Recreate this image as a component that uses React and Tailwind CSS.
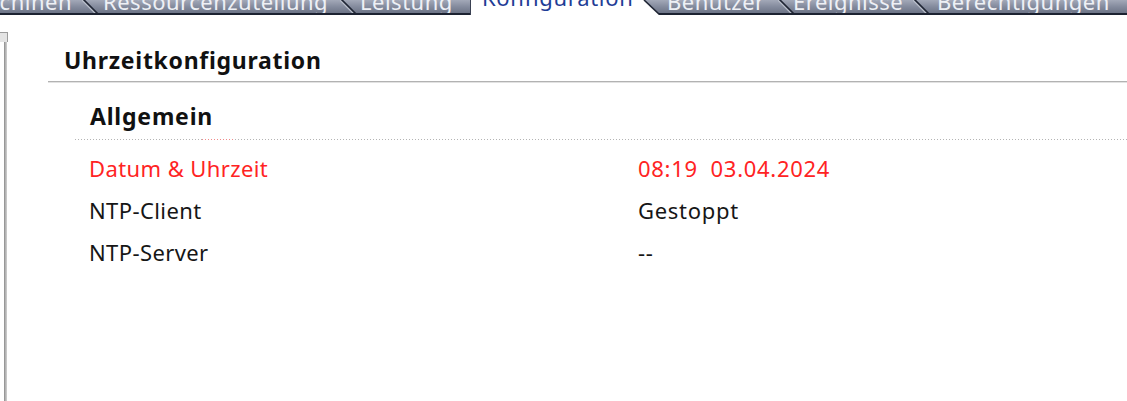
import React from "react";

function Sep() {
  return (
    <svg className="absolute left-0 top-0" width="18" height="15" viewBox="0 0 18 15">
      <line x1="-1" y1="-1" x2="15" y2="15" stroke="#b8bdc9" strokeWidth="1.5" />
      <line x1="1" y1="-1" x2="17" y2="15" stroke="#1f2534" strokeWidth="1.6" />
    </svg>
  );
}

function Tab({ w, pl, children, sep = true, grow = false }) {
  return (
    <div
      className={`relative h-[15px] shrink-0 overflow-hidden border-b-2 border-[#1c2231] bg-gradient-to-b from-[#a3a9b8] via-[#858c9e] to-[#6d7487] ${grow ? "flex-1" : ""}`}
      style={grow ? undefined : { width: w }}
    >
      {sep && <Sep />}
      <div
        className="mt-[-14.5px] whitespace-nowrap text-[22px] leading-[30px] tracking-[0.5px] text-[#eef0f5]"
        style={{ paddingLeft: pl }}
      >
        {children}
      </div>
    </div>
  );
}

export default function App() {
  const rows = [
    { k: "Datum & Uhrzeit", v: "08:19\u00a0\u00a003.04.2024", red: true },
    { k: "NTP-Client", v: "Gestoppt" },
    { k: "NTP-Server", v: "--" },
  ];
  return (
    <div className="flex h-[401px] w-[1127px] flex-col overflow-hidden bg-white font-['Noto_Sans','DejaVu_Sans',sans-serif] text-[#141414]">
      {/* tab bar */}
      <div className="flex h-[15px] shrink-0">
        <div className="relative flex h-[15px] w-[82px] shrink-0 justify-end overflow-hidden border-b-2 border-[#1c2231] bg-gradient-to-b from-[#a3a9b8] via-[#858c9e] to-[#6d7487]">
          <div className="mt-[-14.5px] whitespace-nowrap pr-[10px] text-[22px] leading-[30px] tracking-[0.5px] text-[#eef0f5]">
            Virtuelle Maschinen
          </div>
        </div>
        <Tab w={258} pl={21}>Ressourcenzuteilung</Tab>
        <Tab w={130} pl={20}>Leistung</Tab>
        <div className="relative h-[15px] w-[173px] shrink-0 border-l border-[#3a4152] bg-white">
          <div className="mt-[-18px] whitespace-nowrap pl-[11px] text-[22px] leading-[30px] tracking-[0.7px] text-[#1f3d96]">
            Konfiguration
          </div>
          <svg className="absolute left-[172px] top-0 z-10" width="20" height="15" viewBox="0 0 20 15">
            <polygon points="0,0 1,0 17,15 0,15" fill="#ffffff" />
            <line x1="1" y1="0" x2="17" y2="15" stroke="#1f2534" strokeWidth="1.6" />
          </svg>
        </div>
        <Tab w={135} pl={24} sep={false}>Benutzer</Tab>
        <Tab w={135} pl={15}>Ereignisse</Tab>
        <Tab grow pl={24}>Berechtigungen</Tab>
      </div>

      {/* body */}
      <div className="flex flex-1">
        <div className="flex w-[8px] shrink-0 flex-col pt-[17px]">
          <div className="h-[10px] w-[8px] border-r border-t border-[#9c9c9c] bg-[#e4e4e4]" />
          <div className="ml-[4px] w-[3px] flex-1 bg-gradient-to-r from-[#8a8a8a] via-[#b4b4b4] to-[#d0d0d0]" />
        </div>

        <div className="flex flex-1 flex-col pl-[40px] pt-[30px]">
          <div className="border-b border-[#b2b2b2] pb-[6px] pl-[16px] text-[23px] font-bold leading-[30px] tracking-[0.72px] text-[#111]">
            Uhrzeitkonfiguration
          </div>
          <div className="h-[1px] bg-[#e2e2e2]" />

          <div className="pl-[42px] pt-[18px] text-[23px] font-bold leading-[30px] tracking-[0.8px] text-[#111]">
            Allgemein
          </div>

          <div className="ml-[27px] mt-[8px] flex h-[1px]">
            <div className="w-[127px] bg-[repeating-linear-gradient(to_right,#b4b4b4_0_1px,transparent_1px_3px)]" />
            <div className="w-[33px] bg-[repeating-linear-gradient(to_right,#f08a8a_0_1px,transparent_1px_3px)]" />
            <div className="flex-1 bg-[repeating-linear-gradient(to_right,#b4b4b4_0_1px,transparent_1px_3px)]" />
          </div>

          <div className="flex flex-col pl-[41px] pt-[12.5px]">
            {rows.map((r) => (
              <div
                key={r.k}
                className={`grid h-[42px] grid-cols-[549px_1fr] text-[22px] leading-[30px] ${r.red ? "text-[#ff2323]" : "text-[#161616]"}`}
              >
                <div className="tracking-[0.4px]">{r.k}</div>
                <div className="whitespace-pre tracking-[0.7px]">{r.v}</div>
              </div>
            ))}
          </div>
        </div>
      </div>
    </div>
  );
}
